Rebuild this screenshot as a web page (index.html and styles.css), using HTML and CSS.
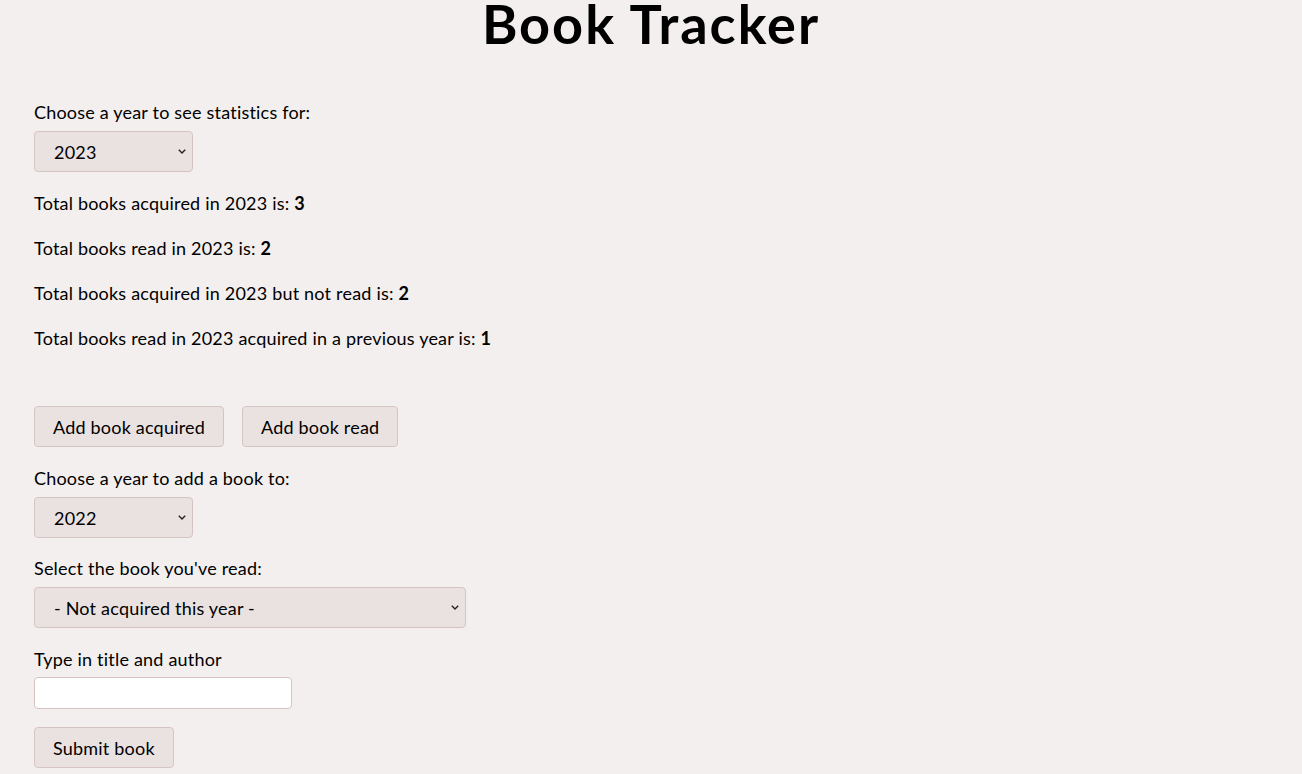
FILE: index.html
```html
<!DOCTYPE html>
<html lang="en">
<head>
<meta charset="utf-8">
<title>Book Tracker</title>
<link rel="stylesheet" href="styles.css">
</head>
<body>
  <h1 class="title">Book Tracker</h1>
  <main class="content">
    <section class="stats">
      <div class="field">
        <label class="label" for="stat-year">Choose a year to see statistics for:</label>
        <div class="select-wrap">
          <select class="select select-year" id="stat-year">
            <option>2023</option>
            <option>2022</option>
          </select>
          <svg class="chevron" width="8" height="5" viewBox="0 0 8 5" aria-hidden="true"><path d="M0.8 0.8 L4 4 L7.2 0.8" fill="none" stroke="#222" stroke-width="1.4"/></svg>
        </div>
      </div>
      <p class="stat">Total books acquired in 2023 is: <b>3</b></p>
      <p class="stat">Total books read in 2023 is: <b>2</b></p>
      <p class="stat">Total books acquired in 2023 but not read is: <b>2</b></p>
      <p class="stat">Total books read in 2023 acquired in a previous year is: <b>1</b></p>
    </section>

    <section class="add">
      <div class="actions">
        <button class="btn" type="button">Add book acquired</button>
        <button class="btn" type="button">Add book read</button>
      </div>
      <div class="field field-short">
        <label class="label" for="add-year">Choose a year to add a book to:</label>
        <div class="select-wrap">
          <select class="select select-year" id="add-year">
            <option>2022</option>
            <option>2023</option>
          </select>
          <svg class="chevron" width="8" height="5" viewBox="0 0 8 5" aria-hidden="true"><path d="M0.8 0.8 L4 4 L7.2 0.8" fill="none" stroke="#222" stroke-width="1.4"/></svg>
        </div>
      </div>
      <div class="field">
        <label class="label" for="book">Select the book you've read:</label>
        <div class="select-wrap">
          <select class="select select-book" id="book">
            <option>- Not acquired this year -</option>
          </select>
          <svg class="chevron" width="8" height="5" viewBox="0 0 8 5" aria-hidden="true"><path d="M0.8 0.8 L4 4 L7.2 0.8" fill="none" stroke="#222" stroke-width="1.4"/></svg>
        </div>
      </div>
      <div class="field">
        <label class="label label-tight" for="title">Type in title and author</label>
        <input class="text-input" id="title" type="text">
      </div>
      <div class="field">
        <button class="btn" type="submit">Submit book</button>
      </div>
    </section>
  </main>
</body>
</html>
```

FILE: styles.css
```css
html, body {
  margin: 0;
  padding: 0;
}
body {
  background: #f3efee;
  color: #000;
  font-family: "Lato", "Open Sans", sans-serif;
  font-size: 18px;
  line-height: 27px;
  letter-spacing: 0.2px;
}
.title {
  margin: 0;
  text-align: center;
  font-size: 54px;
  line-height: 48px;
  font-weight: 700;
  letter-spacing: 2px;
}
.content {
  padding: 51px 34px 0;
}
.field {
  display: flex;
  flex-direction: column;
  align-items: flex-start;
  margin-bottom: 18px;
}
.field-short {
  margin-bottom: 17px;
}
.label {
  display: block;
  margin-bottom: 5px;
}
.label-tight {
  margin-bottom: 4px;
}
.stat {
  margin: 0 0 18px;
}
.add {
  margin-top: 54px;
}
.actions {
  display: flex;
  gap: 18px;
  margin-bottom: 18px;
}
.select,
.btn,
.text-input {
  font-family: inherit;
  font-size: 18px;
  letter-spacing: 0.2px;
  color: #000;
  border: 1px solid #d5c4c2;
  border-radius: 4px;
  box-sizing: border-box;
}
.select-wrap {
  position: relative;
  display: inline-block;
}
.select {
  display: block;
  height: 41px;
  background-color: #eae2e1;
  padding: 0 20px 0 19px;
  appearance: none;
  -webkit-appearance: none;
}
.chevron {
  position: absolute;
  right: 7px;
  top: 18px;
  pointer-events: none;
}
.select-year {
  width: 159px;
}
.select-book {
  width: 432px;
}
.btn {
  height: 41px;
  padding: 0 18px;
  background: #eae2e1;
  cursor: pointer;
}
.btn-wide {
  padding: 0 19px;
}
.text-input {
  width: 258px;
  height: 32px;
  background: #fff;
  padding: 0 8px;
}
```
